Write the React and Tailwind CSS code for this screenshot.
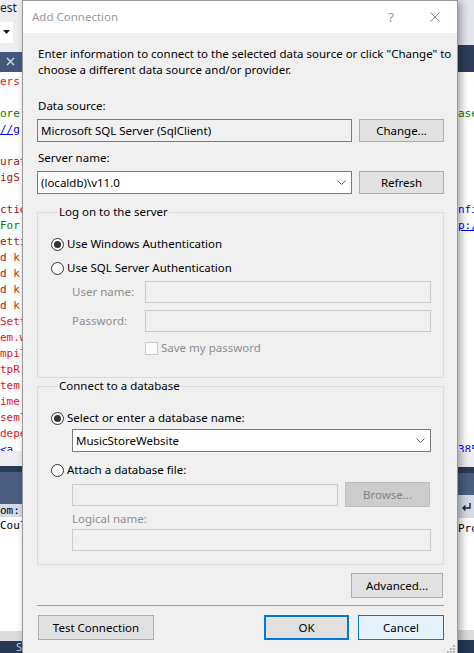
import React from 'react';

const UI = "font-['Noto_Sans',sans-serif]";
const MONO = "font-['DejaVu_Sans_Mono',monospace]";

const RED = '#e0161b';
const DARK = '#a31515';
const GREEN = '#008000';
const BLUE = '#0000ff';

// fragments of the code editor that peek out on both sides of the dialog
const leftCode = [
    [['ers:', RED]],
    [],
    [['ore', GREEN]],
    [['//g', BLUE, true]],
    [],
    [['urat', DARK]],
    [['igS', DARK]],
    [],
    [['ctio', DARK]],
    [['For', GREEN]],
    [['etti', DARK]],
    [['d ', DARK], ['k', RED]],
    [['d ', DARK], ['k', RED]],
    [['d ', DARK], ['k', RED]],
    [['d ', DARK], ['k', RED]],
    [['Sett', RED]],
    [['em.w', RED]],
    [['mpil', RED]],
    [['tpR', RED]],
    [['tem', RED]],
    [['ime:', RED]],
    [['seml', RED]],
    [['depe', RED]],
    [['  <a', BLUE]],
];

const rightCode = {
    2: ['ase', GREEN],
    8: ['nfi', BLUE],
    9: ['p:/', BLUE, true],
    23: ['385', BLUE],
};

const CodeLine = ({ parts }) => (
    <div className="h-[16px] leading-[16px] whitespace-nowrap">
        {parts.map(([t, c, u], i) => (
            <span key={i} style={{ color: c }} className={u ? 'underline' : ''}>{t}</span>
        ))}
    </div>
);

const LeftIde = () => (
    <div className="w-[237px] h-full flex flex-col">
        <div className={`h-[22px] bg-[#eeeef2] text-[12px] leading-[16px] text-[#1e1e1e] ${UI}`}>est</div>
        <div className="h-[21px] bg-[#eeeef2] flex">
            <div className="w-[13px] h-full bg-white flex items-center justify-center">
                <svg width="7" height="4" viewBox="0 0 7 4"><path d="M0 0h7L3.5 4z" fill="#1e1e1e" /></svg>
            </div>
        </div>
        <div className="h-[9px] bg-[#eeeef2]" />
        <div className="h-[20px] bg-[#44587c] flex items-center pl-[6px]">
            <svg width="9" height="9" viewBox="0 0 9 9"><path d="M1 1l7 7M8 1L1 8" stroke="#d6dce8" strokeWidth="1.3" /></svg>
        </div>
        <div className={`h-[380px] bg-white pt-[2px] overflow-hidden text-[11px] ${MONO}`}>
            {leftCode.map((p, i) => <CodeLine key={i} parts={p} />)}
        </div>
        <div className="h-[15px] bg-[#eeeef2]" />
        <div className="h-[6px] bg-[#2b3a55]" />
        <div className="h-[32px] bg-[#4b5e82]" />
        <div className={`h-[13px] bg-[#d5dbe8] text-[11px] leading-[13px] ${MONO}`}>om:</div>
        <div className={`h-[114px] bg-white text-[11px] leading-[16px] pt-[1px] ${MONO}`}>Coul</div>
        <div className="h-[10px] bg-[#dcdcdc]" />
        <div className={`flex-1 bg-[#293955] text-[11px] leading-[12px] text-[#c8d0e0] pl-[16px] ${UI}`}>S</div>
    </div>
);

const RightIde = () => (
    <div className="flex-1 h-full flex flex-col items-stretch">
        <div className="h-[45px] bg-[#e4e6ed]" />
        <div className="h-[27px] bg-[#2f3e5c]" />
        <div className={`h-[380px] bg-white pt-[2px] overflow-hidden text-[11px] ${MONO}`}>
            {leftCode.map((_, i) => {
                const r = rightCode[i];
                return (
                    <div key={i} className="h-[16px] leading-[16px] flex justify-end">
                        <div className="w-[16px] overflow-hidden whitespace-nowrap">
                            {r && <span style={{ color: r[1] }} className={r[2] ? 'underline' : ''}>{r[0]}</span>}
                        </div>
                    </div>
                );
            })}
        </div>
        <div className="h-[15px] bg-[#eeeef2]" />
        <div className="h-[6px] bg-[#2b3a55]" />
        <div className="h-[22px] bg-[#4b5e82]" />
        <div className="h-[23px] bg-[#d5dbe8] flex justify-end items-center">
            <div className="w-[16px] pl-[3px]">
                <svg width="11" height="10" viewBox="0 0 11 10" fill="none" stroke="#1e1e1e" strokeWidth="1.4">
                    <path d="M9 1v5H2M4.5 3.5L2 6l2.5 2.5" />
                </svg>
            </div>
        </div>
        <div className={`h-[112px] bg-white text-[11px] leading-[16px] pt-[3px] flex justify-end ${MONO}`}>
            <div className="w-[16px] overflow-hidden whitespace-nowrap">Pro</div>
        </div>
        <div className="h-[10px] bg-[#dcdcdc]" />
        <div className="flex-1 bg-[#293955]" />
    </div>
);

const Button = ({ children, className = '', disabled, short }) => (
    <div
        className={`${short ? 'h-[23px]' : 'h-[25px]'} flex items-center justify-center ${
            disabled ? 'bg-[#cccccc] border border-[#bfbfbf] text-[#838383]' : 'bg-[#e1e1e1] border border-[#adadad] text-black'
        } ${className}`}
    >
        {children}
    </div>
);

const Chevron = () => (
    <svg width="9" height="5" viewBox="0 0 9 5" fill="none" stroke="#606060" strokeWidth="1">
        <path d="M0.5 0.5L4.5 4.5L8.5 0.5" />
    </svg>
);

const Combo = ({ value, className = '' }) => (
    <div className={`h-[23px] bg-white border border-[#7a7a7a] flex items-center justify-between pl-[3px] pr-[5px] ${className}`}>
        <span>{value}</span>
        <Chevron />
    </div>
);

const Radio = ({ checked, label }) => (
    <div className="h-[16px] flex items-center">
        <div className="w-[13px] h-[13px] rounded-full border border-[#333333] bg-white flex items-center justify-center">
            {checked && <div className="w-[7px] h-[7px] rounded-full bg-[#333333]" />}
        </div>
        <span className="ml-[3px] leading-[16px]">{label}</span>
    </div>
);

const DisabledInput = ({ className = '' }) => (
    <div className={`h-[22px] bg-[#f0f0f0] border border-[#cccccc] ${className}`} />
);

const GroupBox = ({ title, className = '', children }) => (
    <div className={`border border-[#dcdcdc] pl-[13px] pr-[12px] ${className}`}>
        <div className="-mt-[9px] ml-[7px] w-fit px-[1px] bg-[#f0f0f0] leading-[16px]">{title}</div>
        {children}
    </div>
);

const Dialog = () => (
    <div className={`absolute left-[22px] top-0 w-[436px] h-[700px] border border-[#9a9a9a] bg-[#f0f0f0] flex flex-col shadow-[3px_2px_8px_rgba(0,0,0,0.35)] text-[11.5px] text-black ${UI}`}>
        {/* title bar */}
        <div className="h-[32px] bg-white flex items-center pl-[9px] pr-[17px] text-[#999999]">
            <span className="flex-1 text-[11.5px] leading-[16px]">Add Connection</span>
            <span className="text-[13px] leading-[16px] mr-[36px]">?</span>
            <svg width="10" height="10" viewBox="0 0 10 10"><path d="M0.5 0.5l9 9M9.5 0.5l-9 9" stroke="#8a8a8a" strokeWidth="1" /></svg>
        </div>

        {/* body */}
        <div className="relative flex-1 pl-[14px] pr-[13px] flex flex-col">
            <p className="mt-[13px] pl-[1px] leading-[16px] whitespace-nowrap">
                Enter information to connect to the selected data source or click "Change" to
                <br />
                choose a different data source and/or provider.
            </p>

            <div className="mt-[20px] pl-[1px] leading-[16px]">Data source:</div>
            <div className="mt-[5px] flex gap-[7px]">
                <div className="w-[315px] h-[23px] bg-[#f0f0f0] border border-[#7a7a7a] flex items-center pl-[3px]">
                    Microsoft SQL Server (SqlClient)
                </div>
                <Button short className="flex-1">Change...</Button>
            </div>

            <div className="mt-[8px] pl-[1px] leading-[16px]">Server name:</div>
            <div className="mt-[5px] flex gap-[7px]">
                <Combo value="(localdb)\v11.0" className="w-[315px]" />
                <Button short className="flex-1">Refresh</Button>
            </div>

            <GroupBox title="Log on to the server" className="mt-[18px] h-[166px]">
                <div className="mt-[16px]"><Radio checked label="Use Windows Authentication" /></div>
                <div className="mt-[8px]"><Radio label="Use SQL Server Authentication" /></div>
                <div className="mt-[5px] flex items-center pl-[21px] text-[#8f8f8f]">
                    <span className="w-[73px]">User name:</span>
                    <DisabledInput className="flex-1" />
                </div>
                <div className="mt-[7px] flex items-center pl-[21px] text-[#8f8f8f]">
                    <span className="w-[73px]">Password:</span>
                    <DisabledInput className="flex-1" />
                </div>
                <div className="mt-[8px] h-[16px] flex items-center pl-[94px] text-[#8f8f8f]">
                    <div className="w-[13px] h-[13px] bg-[#fbfbfb] border border-[#cccccc]" />
                    <span className="ml-[3px]">Save my password</span>
                </div>
            </GroupBox>

            <GroupBox title="Connect to a database" className="mt-[8px] h-[179px]">
                <div className="mt-[16px]"><Radio checked label="Select or enter a database name:" /></div>
                <Combo value="MusicStoreWebsite" className="mt-[3px] ml-[21px]" />
                <div className="mt-[10px]"><Radio label="Attach a database file:" /></div>
                <div className="mt-[4px] ml-[21px] flex items-center gap-[7px] mr-[1px]">
                    <DisabledInput className="w-[266px]" />
                    <Button disabled className="flex-1">Browse...</Button>
                </div>
                <div className="mt-[4px] ml-[21px] leading-[16px] text-[#8f8f8f]">Logical name:</div>
                <DisabledInput className="mt-[2px] ml-[21px]" />
            </GroupBox>

            <div className="mt-[8px] flex justify-end pr-[1px]">
                <Button className="w-[92px]">Advanced...</Button>
            </div>

            <div className="mt-[7px] h-px bg-[#a0a0a0]" />

            <div className="mt-[9px] flex items-center">
                <Button className="ml-[1px] w-[116px]">Test Connection</Button>
                <div className="flex-1" />
                <div className="w-[85px] h-[25px] flex items-center justify-center bg-[#e1e1e1] border-2 border-[#0078d7]">OK</div>
                <div className="ml-[9px] w-[86px] h-[25px] flex items-center justify-center bg-[#e5f1fb] border border-[#0078d7]">Cancel</div>
            </div>

            {/* size grip */}
            <div className="mt-[4px] flex justify-end -mr-[12px]">
                <svg width="10" height="10" viewBox="0 0 10 10" fill="#b4b4b4">
                    <rect x="7" y="1" width="2" height="2" />
                    <rect x="4" y="4" width="2" height="2" />
                    <rect x="7" y="4" width="2" height="2" />
                    <rect x="1" y="7" width="2" height="2" />
                    <rect x="4" y="7" width="2" height="2" />
                    <rect x="7" y="7" width="2" height="2" />
                </svg>
            </div>
        </div>
    </div>
);

export default function App() {
    return (
        <div className="relative w-[474px] h-[653px] overflow-hidden bg-white">
            <div className="flex w-full h-full">
                <LeftIde />
                <RightIde />
            </div>
            <Dialog />
        </div>
    );
}
